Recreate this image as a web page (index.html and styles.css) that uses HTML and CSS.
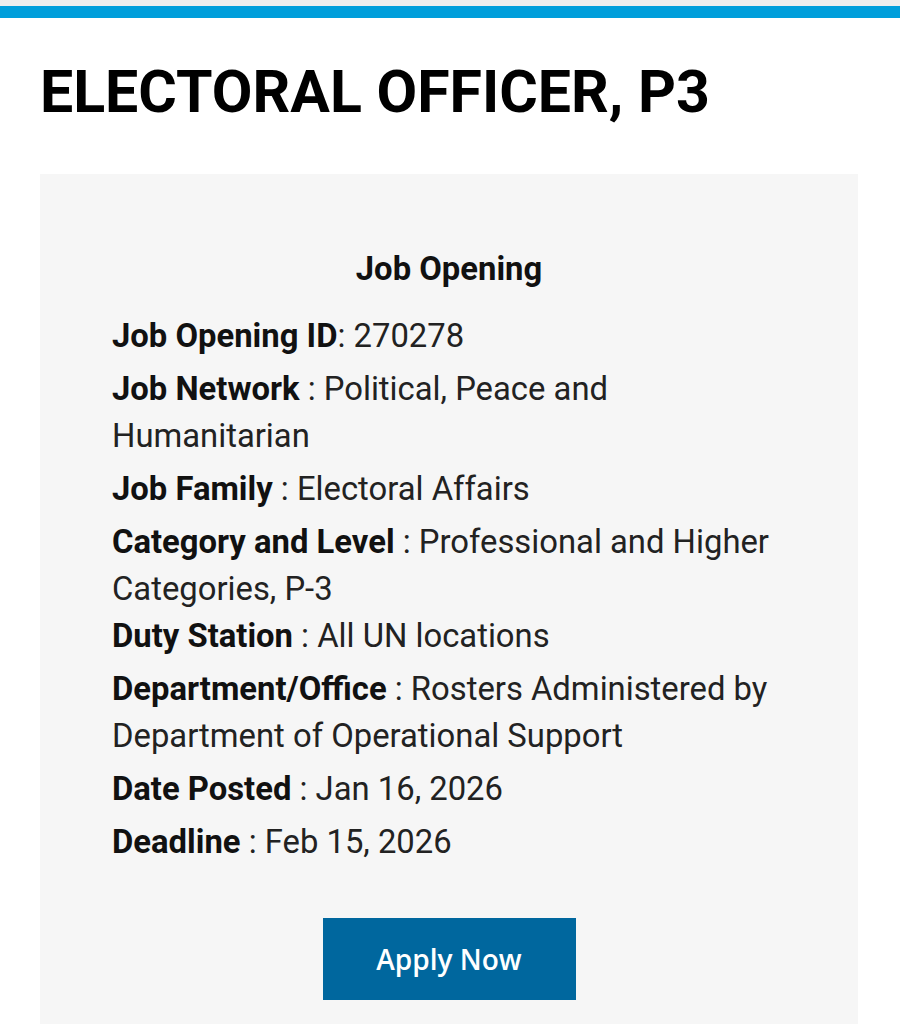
FILE: index.html
```html
<!DOCTYPE html>
<html lang="en">
<head>
<meta charset="utf-8">
<title>Electoral Officer, P3</title>
<link rel="stylesheet" href="styles.css">
</head>
<body>
<div class="topstrip"></div>
<div class="topbar"></div>
<main class="page">
  <h1 class="title">ELECTORAL OFFICER, P3</h1>
  <section class="card">
    <h2 class="card-heading">Job Opening</h2>
    <p class="row"><b>Job Opening ID</b>: 270278</p>
    <p class="row"><b>Job Network</b> : Political, Peace and Humanitarian</p>
    <p class="row"><b>Job Family</b> : Electoral Affairs</p>
    <p class="row"><b>Category and Level</b> : Professional and Higher Categories, P-3<br><b>Duty Station</b> : All UN locations</p>
    <p class="row"><b>Department/Office</b> : Rosters Administered by Department of Operational Support</p>
    <p class="row"><b>Date Posted</b> : Jan 16, 2026</p>
    <p class="row"><b>Deadline</b> : Feb 15, 2026</p>
    <div class="actions"><a class="apply" href="#">Apply Now</a></div>
  </section>
</main>
</body>
</html>
```
FILE: styles.css
```css
html, body {
  margin: 0;
  padding: 0;
  background: #ffffff;
}
body {
  font-family: Roboto, "Liberation Sans", sans-serif;
  color: #1a1a1a;
}
.topstrip {
  height: 6px;
  background: #eeeeee;
}
.topbar {
  height: 12px;
  background: #009edb;
}
.page {
  padding: 38px 42px 0 40px;
}
.title {
  margin: 0 0 46px 0;
  font-size: 59px;
  line-height: 72px;
  font-weight: 700;
  color: #000000;
}
.card {
  background: #f6f6f6;
  padding: 72px 72px 40px 72px;
  min-height: 900px;
  box-sizing: border-box;
}
.card-heading {
  margin: 0 0 20px 0;
  text-align: center;
  font-size: 32.8px;
  line-height: 47px;
  font-weight: 700;
  color: #111111;
}
.row {
  margin: 0 0 6px 0;
  font-size: 32.8px;
  line-height: 47px;
  color: #222222;
}
.row b {
  font-weight: 700;
  color: #111111;
}
.actions {
  display: flex;
  justify-content: center;
  padding-top: 46px;
}
.apply {
  display: flex;
  align-items: center;
  justify-content: center;
  width: 253px;
  height: 82px;
  background: #00679e;
  color: #ffffff;
  text-decoration: none;
  font-family: "Open Sans", "Noto Sans", sans-serif;
  font-weight: 600;
  font-size: 28px;
}
```
